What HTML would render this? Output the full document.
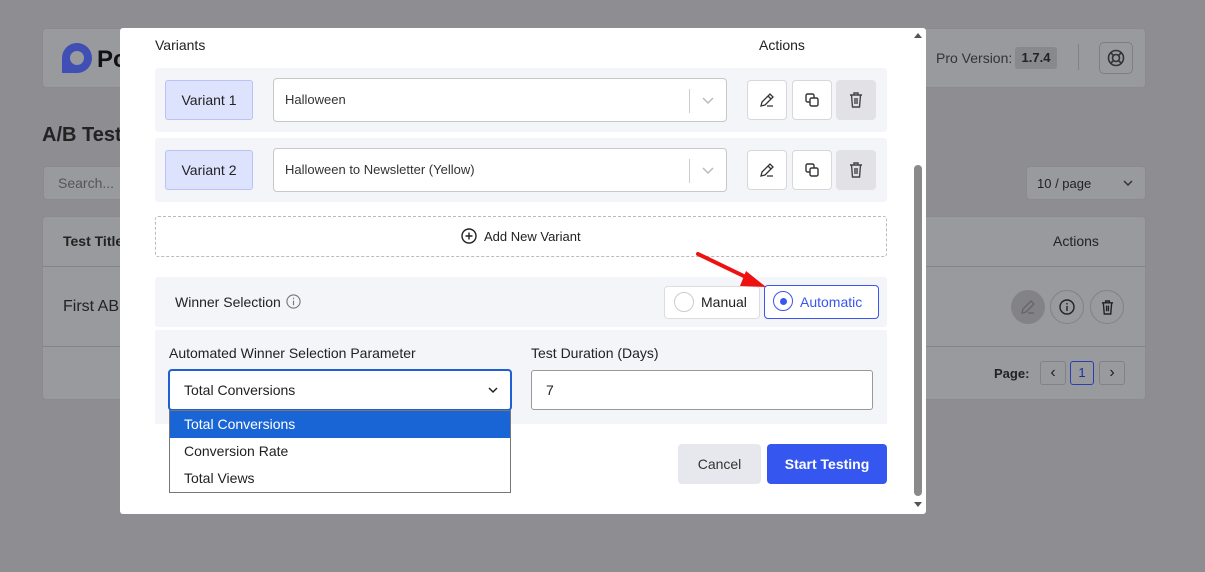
<!DOCTYPE html>
<html><head><style>
*{box-sizing:border-box;margin:0;padding:0}
body{width:1205px;height:572px;background:#8d8d92;font-family:"Liberation Sans",sans-serif;position:relative;overflow:hidden;color:#1f1f1f}
.card{position:absolute;background:#999a9e;border-radius:4px;border:1px solid #8a8a8f}
.abs{position:absolute}
.modal{position:absolute;left:120px;top:28px;width:806px;height:486px;background:#fff;border-radius:3px;overflow:hidden}
.row{position:absolute;left:35px;width:732px;height:64px;background:#f4f5f9;border-radius:3px}
.vlab{position:absolute;left:10px;top:12px;width:88px;height:40px;background:#dde2fd;border:1px solid #b9c3f5;border-radius:3px;text-align:center;line-height:38px;font-size:14px;color:#222}
.sel{position:absolute;left:118px;top:10px;width:454px;height:44px;background:#fff;border:1px solid #c8c8c8;border-radius:4px;font-size:13px;line-height:42px;padding-left:11px;color:#333}
.sel .sep{position:absolute;right:36px;top:10px;height:24px;border-left:1px solid #ccc}
.sel svg{position:absolute;right:12px;top:18px}
.ib{position:absolute;top:12px;width:40px;height:40px;background:#fff;border:1px solid #d8d8d8;border-radius:4px;display:flex;align-items:center;justify-content:center}
.ib.g{background:#e1e1e6;border-color:#e1e1e6}
</style></head><body>
<div class="card" style="left:42px;top:28px;width:1104px;height:60px"></div>
<div class="abs" style="left:62px;top:43px;width:30px;height:30px;border-radius:50% 50% 50% 0;background:#3f4fb3"></div>
<div class="abs" style="left:70px;top:51px;width:14px;height:14px;border-radius:50%;background:#999a9e"></div>
<div class="abs" style="left:97px;top:46px;font-size:24px;font-weight:bold;color:#111">Po</div>
<div class="abs" style="left:936px;top:50px;font-size:14px;color:#333">Pro Version:</div>
<div class="abs" style="left:1015px;top:47px;width:42px;height:22px;background:#88898d;border-radius:3px;font-size:13px;font-weight:bold;text-align:center;line-height:22px;color:#222">1.7.4</div>
<div class="abs" style="left:1078px;top:44px;height:26px;border-left:1px solid #808085"></div>
<div class="abs" style="left:1099px;top:42px;width:34px;height:32px;border:1px solid #7e7e83;border-radius:5px;display:flex;align-items:center;justify-content:center"><svg width="18" height="18" viewBox="0 0 18 18" fill="none" stroke="#333" stroke-width="1.6"><circle cx="9" cy="9" r="7.5"/><circle cx="9" cy="9" r="3.5"/><path d="M4 4l2.5 2.5M14 4l-2.5 2.5M4 14l2.5-2.5M14 14l-2.5-2.5"/></svg></div>
<div class="abs" style="left:42px;top:124px;font-size:20px;font-weight:bold;color:#222">A/B Test</div>
<div class="card" style="left:43px;top:166px;width:90px;height:34px;border-radius:4px"></div>
<div class="abs" style="left:58px;top:175px;font-size:14px;color:#555">Search...</div>
<div class="card" style="left:1026px;top:166px;width:120px;height:34px"></div>
<div class="abs" style="left:1037px;top:176px;font-size:13px;color:#222">10 / page</div>
<svg class="abs" style="left:1122px;top:179px" width="12" height="8" viewBox="0 0 12 8"><path d="M2 2l4 4 4-4" fill="none" stroke="#333" stroke-width="1.5"/></svg>
<div class="card" style="left:42px;top:216px;width:1104px;height:184px"></div>
<div class="abs" style="left:43px;top:266px;width:1102px;border-top:1px solid #858589"></div>
<div class="abs" style="left:43px;top:346px;width:1102px;border-top:1px solid #858589"></div>
<div class="abs" style="left:63px;top:233px;font-size:14px;font-weight:bold;color:#222">Test Title</div>
<div class="abs" style="left:1053px;top:233px;font-size:14px;color:#222">Actions</div>
<div class="abs" style="left:63px;top:298px;font-size:16px;color:#222">First AB</div>
<div class="abs" style="left:1011px;top:290px;width:34px;height:34px;border-radius:50%;background:#828287;display:flex;align-items:center;justify-content:center"><svg width="16" height="16" viewBox="0 0 16 16" fill="none" stroke="#666" stroke-width="1.3"><path d="M2 14l1-4 8-8 3 3-8 8z M8 14h6"/></svg></div>
<div class="abs" style="left:1050px;top:290px;width:34px;height:34px;border-radius:50%;border:1px solid #818186;display:flex;align-items:center;justify-content:center"><svg width="16" height="16" viewBox="0 0 16 16" fill="none" stroke="#222" stroke-width="1.4"><circle cx="8" cy="8" r="7"/><path d="M8 7v5M8 4v1.5"/></svg></div>
<div class="abs" style="left:1090px;top:290px;width:34px;height:34px;border-radius:50%;border:1px solid #818186;display:flex;align-items:center;justify-content:center"><svg width="13" height="15" viewBox="0 0 14 16" fill="none" stroke="#222" stroke-width="1.5"><path d="M1 3h12M5 3V1h4v2M2.5 3l1 12h7l1-12M6 6v6M8 6v6"/></svg></div>
<div class="abs" style="left:994px;top:366px;font-size:13px;font-weight:bold;color:#222">Page:</div>
<div class="abs" style="left:1040px;top:361px;width:26px;height:24px;border:1px solid #818186;border-radius:3px;text-align:center;line-height:22px">‹</div>
<div class="abs" style="left:1070px;top:361px;width:24px;height:24px;border:1px solid #2b3eb0;border-radius:3px;text-align:center;line-height:22px;font-size:13px;color:#1b2e9f">1</div>
<div class="abs" style="left:1099px;top:361px;width:26px;height:24px;border:1px solid #818186;border-radius:3px;text-align:center;line-height:22px">›</div>

<div class="modal">
 <div class="abs" style="left:35px;top:9px;font-size:14px;color:#222">Variants</div>
 <div class="abs" style="left:639px;top:9px;font-size:14px;color:#222">Actions</div>
 <div class="row" style="top:40px">
  <div class="vlab">Variant 1</div>
  <div class="sel">Halloween<span class="sep"></span><svg width="12" height="8" viewBox="0 0 12 8"><path d="M1 1l5 5 5-5" fill="none" stroke="#bbb" stroke-width="1.5"/></svg></div>
  <div class="ib" style="left:592px"><svg width="16" height="16" viewBox="0 0 16 16" fill="none" stroke="#333" stroke-width="1.3"><path d="M2 14l1-4 8-8 3 3-8 8z M9 4l3 3 M8 14h6"/></svg></div>
  <div class="ib" style="left:637px"><svg width="14" height="14" viewBox="0 0 14 14" fill="none" stroke="#333" stroke-width="1.4"><rect x="1" y="1" width="8" height="8" rx="1.5"/><rect x="5" y="5" width="8" height="8" rx="1.5" fill="#fff"/></svg></div>
  <div class="ib g" style="left:681px"><svg width="14" height="16" viewBox="0 0 14 16" fill="none" stroke="#444" stroke-width="1.4"><path d="M1 3h12M5 3V1h4v2M2.5 3l1 12h7l1-12M6 6v6M8 6v6"/></svg></div>
 </div>
 <div class="row" style="top:110px">
  <div class="vlab">Variant 2</div>
  <div class="sel">Halloween to Newsletter (Yellow)<span class="sep"></span><svg width="12" height="8" viewBox="0 0 12 8"><path d="M1 1l5 5 5-5" fill="none" stroke="#bbb" stroke-width="1.5"/></svg></div>
  <div class="ib" style="left:592px"><svg width="16" height="16" viewBox="0 0 16 16" fill="none" stroke="#333" stroke-width="1.3"><path d="M2 14l1-4 8-8 3 3-8 8z M9 4l3 3 M8 14h6"/></svg></div>
  <div class="ib" style="left:637px"><svg width="14" height="14" viewBox="0 0 14 14" fill="none" stroke="#333" stroke-width="1.4"><rect x="1" y="1" width="8" height="8" rx="1.5"/><rect x="5" y="5" width="8" height="8" rx="1.5" fill="#fff"/></svg></div>
  <div class="ib g" style="left:681px"><svg width="14" height="16" viewBox="0 0 14 16" fill="none" stroke="#444" stroke-width="1.4"><path d="M1 3h12M5 3V1h4v2M2.5 3l1 12h7l1-12M6 6v6M8 6v6"/></svg></div>
 </div>
 <div class="abs" style="left:35px;top:188px;width:732px;height:41px;border:1px dashed #bbb;border-radius:3px"></div>
 <svg class="abs" style="left:341px;top:200px" width="16" height="16" viewBox="0 0 16 16" fill="none" stroke="#222" stroke-width="1.4"><circle cx="8" cy="8" r="7"/><path d="M8 4.5v7M4.5 8h7"/></svg>
 <div class="abs" style="left:364px;top:201px;font-size:13px;color:#222">Add New Variant</div>
 <div class="abs" style="left:35px;top:249px;width:732px;height:50px;background:#f4f5f9;border-radius:3px"></div>
 <div class="abs" style="left:55px;top:266px;font-size:14px;color:#222">Winner Selection</div>
 <svg class="abs" style="left:166px;top:266px" width="15" height="15" viewBox="0 0 16 16" fill="none" stroke="#777" stroke-width="1.2"><circle cx="8" cy="8" r="7"/><path d="M8 7v5M8 4v1.5"/></svg>
 <div class="abs" style="left:544px;top:258px;width:96px;height:33px;background:#fff;border:1px solid #ddd;border-radius:4px;font-size:14px;line-height:31px;padding-left:36px">Manual</div>
 <div class="abs" style="left:554px;top:264px;width:20px;height:20px;border:1px solid #ccc;border-radius:50%"></div>
 <div class="abs" style="left:644px;top:257px;width:115px;height:34px;background:#fff;border:1px solid #3a55f0;border-radius:4px;font-size:14px;line-height:32px;padding-left:35px;color:#3a55f0">Automatic</div>
 <div class="abs" style="left:653px;top:263px;width:20px;height:20px;border:1px solid #3a55f0;border-radius:50%"></div>
 <div class="abs" style="left:660px;top:270px;width:7px;height:7px;background:#3a55f0;border-radius:50%"></div>
 <svg class="abs" style="left:570px;top:220px" width="80" height="50" viewBox="0 0 80 50"><path d="M8 6L62 32" stroke="#ee1111" stroke-width="4" stroke-linecap="round"/><path d="M56 23L76 39 50 38z" fill="#ee1111"/></svg>
 <div class="abs" style="left:35px;top:302px;width:732px;height:94px;background:#f4f5f9"></div>
 <div class="abs" style="left:49px;top:317px;font-size:14px;color:#222">Automated Winner Selection Parameter</div>
 <div class="abs" style="left:411px;top:317px;font-size:14px;color:#222">Test Duration (Days)</div>
 <div class="abs" style="left:49px;top:342px;width:342px;height:40px;background:#fff;border:1px solid #1e5fd4;border-radius:3px;box-shadow:0 0 0 1px #1e5fd4;font-size:14px;line-height:38px;padding-left:14px">Total Conversions<svg style="position:absolute;right:12px;top:16px" width="10" height="7" viewBox="0 0 10 7"><path d="M1 1l4 4 4-4" fill="none" stroke="#222" stroke-width="1.5"/></svg></div>
 <div class="abs" style="left:411px;top:342px;width:342px;height:40px;background:#fff;border:1px solid #999;border-radius:3px;font-size:14px;line-height:38px;padding-left:14px">7</div>
 <div class="abs" style="left:49px;top:382px;width:342px;height:83px;background:#fff;border:1px solid #777;font-size:14px">
  <div style="background:#1a65d6;color:#fff;height:27px;line-height:27px;padding-left:14px">Total Conversions</div>
  <div style="height:27px;line-height:27px;padding-left:14px">Conversion Rate</div>
  <div style="height:27px;line-height:27px;padding-left:14px">Total Views</div>
 </div>
 <div class="abs" style="left:558px;top:416px;width:83px;height:40px;background:#e7e8ee;border-radius:4px;font-size:14px;text-align:center;line-height:40px;color:#333">Cancel</div>
 <div class="abs" style="left:647px;top:416px;width:120px;height:40px;background:#3557f0;border-radius:4px;font-size:14px;font-weight:bold;text-align:center;line-height:40px;color:#fff">Start Testing</div>
 <div class="abs" style="left:794px;top:137px;width:8px;height:331px;background:#8a8a8a;border-radius:4px"></div>
 <svg class="abs" style="left:794px;top:4px" width="8" height="6" viewBox="0 0 8 6"><path d="M0 6L4 1 8 6z" fill="#555"/></svg>
 <svg class="abs" style="left:794px;top:474px" width="8" height="6" viewBox="0 0 8 6"><path d="M0 0L4 5 8 0z" fill="#555"/></svg>
</div>
</body></html>
